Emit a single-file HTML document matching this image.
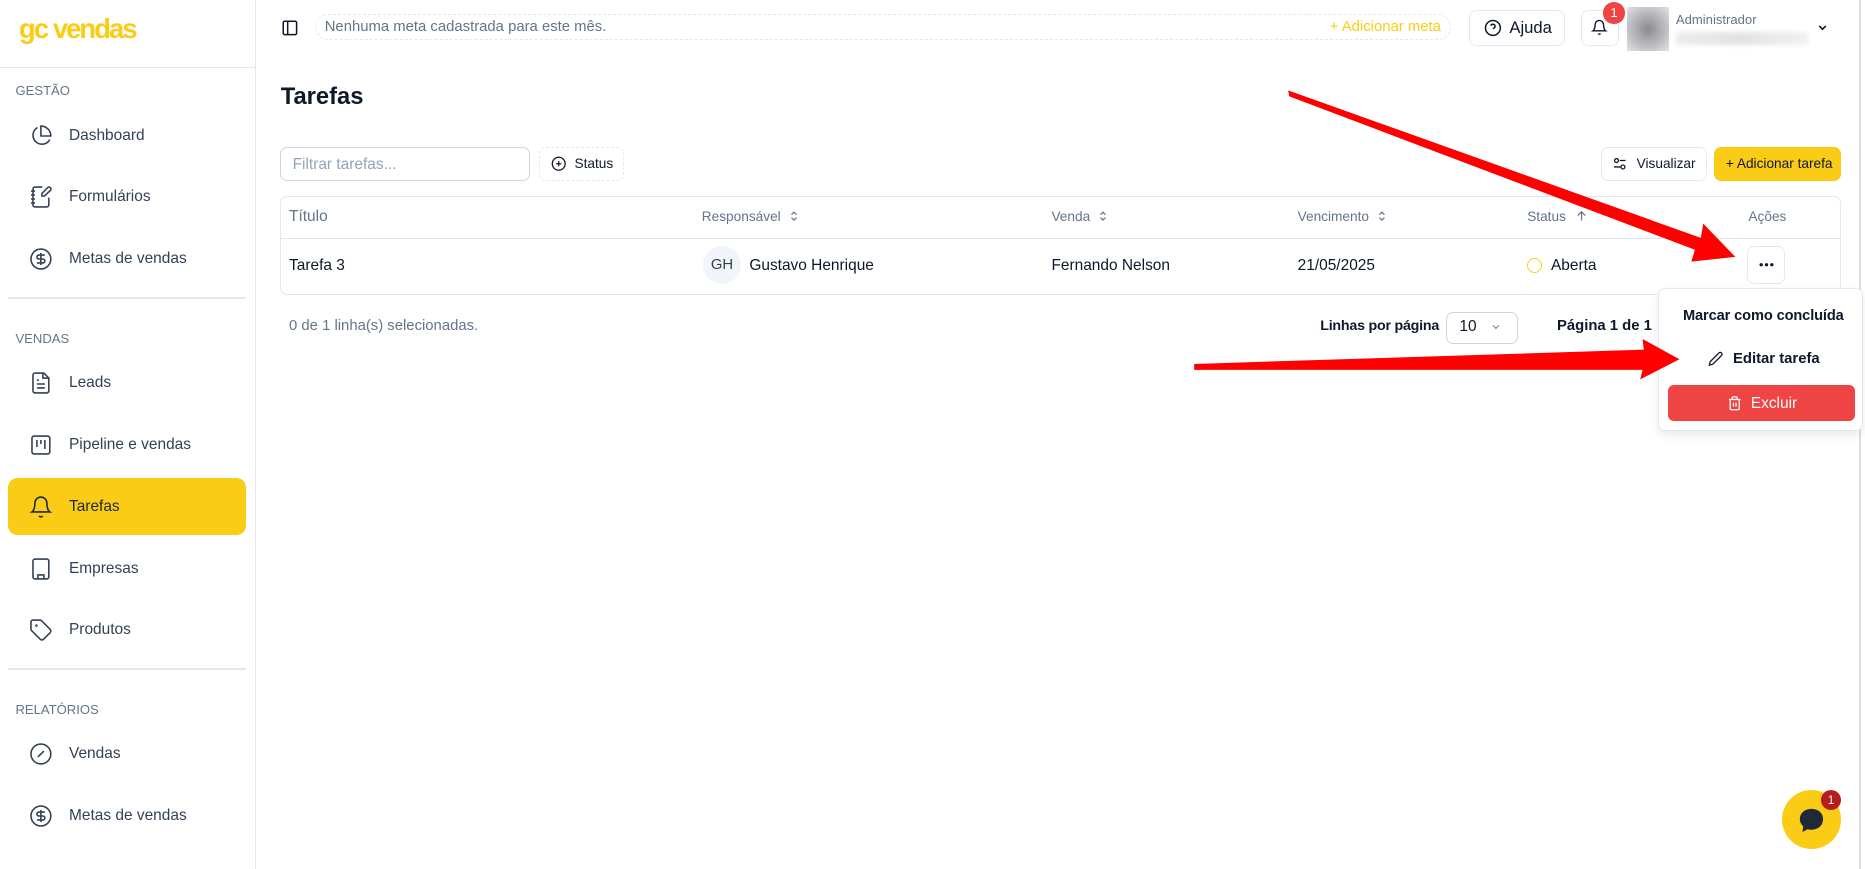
<!DOCTYPE html>
<html><head><meta charset="utf-8">
<style>
html,body{margin:0;padding:0;background:#fff;overflow:hidden}
body{width:1865px;height:869px}
#w{zoom:1.18941;width:1568px;height:731px;position:relative;font-family:"Liberation Sans",sans-serif;color:#0f172a}
.a{position:absolute}
.sb{left:0;top:0;width:214px;height:731px;border-right:1px solid #e5e7eb}
.lbl{font-size:11px;color:#64748b;left:13px}
.it{left:58px;font-size:13px;color:#334155;transform:translateY(-50%)}
.ic{left:24px;width:20px;height:20px;transform:translateY(-50%)}
.hr{height:1px;background:#e5e7eb}
.btn{border:1px solid #e2e8f0;border-radius:6px;background:#fff;box-sizing:border-box}
.th{font-size:11.5px;color:#64748b;top:176px}
.td{font-size:13px;color:#0f172a;top:216px}
.ud{display:inline-block;vertical-align:-2px;margin-left:6px}
</style></head><body><div id="w">
<div class="a sb"></div>
<div class="a" style="left:16px;top:11px;font-size:23px;font-weight:bold;color:#facc15;letter-spacing:-1.6px">gc vendas</div>
<div class="a hr" style="left:0;top:56px;width:214px"></div>
<div class="a lbl" style="top:70px">GESTÃO</div>
<svg class="a ic" style="top:114px" viewBox="0 0 24 24" fill="none" stroke="#334155" stroke-width="1.6"><path d="M21 15.5A9 9 0 1 1 8.5 3.5"/><path d="M22 12A10 10 0 0 0 12 2v10z"/></svg>
<div class="a it" style="top:114px">Dashboard</div>
<svg class="a ic" style="top:166px" viewBox="0 0 24 24" fill="none" stroke="#334155" stroke-width="1.6"><path d="M13.4 2H6a2 2 0 0 0-2 2v16a2 2 0 0 0 2 2h12a2 2 0 0 0 2-2v-7.4M2 6h4M2 10h4M2 14h4M2 18h4"/><path d="M21.4 5.6a2 2 0 1 0-2.8-2.8L13 8.4V11h2.6z"/></svg>
<div class="a it" style="top:166px">Formulários</div>
<svg class="a ic" style="top:218px" viewBox="0 0 24 24" fill="none" stroke="#334155" stroke-width="1.6"><circle cx="12" cy="12" r="10"/><path d="M16 8h-6a2 2 0 1 0 0 4h4a2 2 0 1 1 0 4H8M12 18V6"/></svg>
<div class="a it" style="top:218px">Metas de vendas</div>
<div class="a hr" style="left:7px;top:250px;width:200px"></div>
<div class="a lbl" style="top:278px">VENDAS</div>
<svg class="a ic" style="top:322px" viewBox="0 0 24 24" fill="none" stroke="#334155" stroke-width="1.6"><path d="M15 2H6a2 2 0 0 0-2 2v16a2 2 0 0 0 2 2h12a2 2 0 0 0 2-2V7z"/><path d="M14 2v5h6M16 13H8M16 17H8M10 9H8"/></svg>
<div class="a it" style="top:322px">Leads</div>
<svg class="a ic" style="top:374px" viewBox="0 0 24 24" fill="none" stroke="#334155" stroke-width="1.6"><rect x="3" y="3" width="18" height="18" rx="2"/><path d="M8 7v7M12 7v4M16 7v9"/></svg>
<div class="a it" style="top:374px">Pipeline e vendas</div>
<div class="a" style="left:7px;top:402px;width:200px;height:48px;background:#facc15;border-radius:8px"></div>
<svg class="a ic" style="top:426px" viewBox="0 0 24 24" fill="none" stroke="#1e293b" stroke-width="1.6"><path d="M6 8a6 6 0 0 1 12 0c0 7 3 9 3 9H3s3-2 3-9M10.3 21a1.94 1.94 0 0 0 3.4 0"/></svg>
<div class="a it" style="top:426px;color:#1e293b">Tarefas</div>
<svg class="a ic" style="top:478px" viewBox="0 0 24 24" fill="none" stroke="#334155" stroke-width="1.6"><rect x="4" y="2" width="16" height="20" rx="2"/><path d="M9 22v-4h6v4M8 6h.01M16 6h.01M12 6h.01M12 10h.01M12 14h.01M16 10h.01M16 14h.01M8 10h.01M8 14h.01"/></svg>
<div class="a it" style="top:478px">Empresas</div>
<svg class="a ic" style="top:530px" viewBox="0 0 24 24" fill="none" stroke="#334155" stroke-width="1.6"><path d="M12.6 2.6A2 2 0 0 0 11.2 2H4a2 2 0 0 0-2 2v7.2a2 2 0 0 0 .6 1.4l8.7 8.7a2.4 2.4 0 0 0 3.4 0l6.6-6.6a2.4 2.4 0 0 0 0-3.4z"/><circle cx="7.5" cy="7.5" r=".5"/></svg>
<div class="a it" style="top:530px">Produtos</div>
<div class="a hr" style="left:7px;top:562px;width:200px"></div>
<div class="a lbl" style="top:590px">RELATÓRIOS</div>
<svg class="a ic" style="top:634px" viewBox="0 0 24 24" fill="none" stroke="#334155" stroke-width="1.6"><circle cx="12" cy="12" r="10"/><path d="M15 9l-6 6"/></svg>
<div class="a it" style="top:634px">Vendas</div>
<svg class="a ic" style="top:686px" viewBox="0 0 24 24" fill="none" stroke="#334155" stroke-width="1.6"><circle cx="12" cy="12" r="10"/><path d="M16 8h-6a2 2 0 1 0 0 4h4a2 2 0 1 1 0 4H8M12 18V6"/></svg>
<div class="a it" style="top:686px">Metas de vendas</div>

<!-- header -->
<svg class="a" style="left:236px;top:16px" width="15" height="15" viewBox="0 0 24 24" fill="none" stroke="#0f172a" stroke-width="2"><rect x="3" y="3" width="18" height="18" rx="2"/><path d="M9 3v18"/></svg>
<div class="a" style="left:265px;top:12px;width:955px;height:22px;border:1px dashed #e2e8f0;border-radius:11px;box-sizing:border-box"></div>
<div class="a" style="left:273px;top:16px;font-size:12.5px;color:#64748b">Nenhuma meta cadastrada para este mês.</div>
<div class="a" style="left:1118px;top:16px;font-size:12.5px;color:#facc15">+ Adicionar meta</div>
<div class="a btn" style="left:1235px;top:8px;width:81px;height:31px"></div>
<svg class="a" style="left:1248px;top:16px" width="15" height="15" viewBox="0 0 24 24" fill="none" stroke="#0f172a" stroke-width="2"><circle cx="12" cy="12" r="10"/><path d="M9.1 9a3 3 0 0 1 5.8 1c0 2-3 3-3 3M12 17h.01"/></svg>
<div class="a" style="left:1269px;top:15px;font-size:14px">Ajuda</div>
<div class="a btn" style="left:1329px;top:8px;width:32px;height:31px"></div>
<svg class="a" style="left:1338px;top:16px" width="14" height="14" viewBox="0 0 24 24" fill="none" stroke="#0f172a" stroke-width="2"><path d="M6 8a6 6 0 0 1 12 0c0 7 3 9 3 9H3s3-2 3-9M10.3 21a1.94 1.94 0 0 0 3.4 0"/></svg>
<div class="a" style="left:1348px;top:2px;width:18px;height:18px;border-radius:9px;background:#ef4444;color:#fff;font-size:11px;text-align:center;line-height:18px">1</div>
<div class="a" style="left:1368px;top:6px;width:35px;height:37px;background:radial-gradient(circle,#8a8a90 0%,#c8c8cc 70%,#e4e4e6 100%)"></div>
<div class="a" style="left:1409px;top:10px;font-size:11px;color:#64748b">Administrador</div>
<div class="a" style="left:1409px;top:27px;width:112px;height:11px;background:linear-gradient(90deg,#ececee,#e2e2e4,#f2f2f3);filter:blur(2px)"></div>
<svg class="a" style="left:1527px;top:18px" width="11" height="11" viewBox="0 0 24 24" fill="none" stroke="#0f172a" stroke-width="3"><path d="M6 9l6 6 6-6"/></svg>
<div class="a" style="left:1563px;top:0;width:2px;height:731px;background:#ddd"></div>

<div class="a" style="left:236px;top:70px;font-size:20px;font-weight:bold">Tarefas</div>
<div class="a btn" style="left:235px;top:124px;width:211px;height:28px;border-color:#cbd5e1"></div>
<div class="a" style="left:246px;top:131px;font-size:13px;color:#94a3b8">Filtrar tarefas...</div>
<div class="a" style="left:453px;top:124px;width:72px;height:28px;border:1px dashed #e2e8f0;border-radius:6px;box-sizing:border-box"></div>
<svg class="a" style="left:463px;top:131px" width="13" height="13" viewBox="0 0 24 24" fill="none" stroke="#0f172a" stroke-width="2"><circle cx="12" cy="12" r="10"/><path d="M8 12h8M12 8v8"/></svg>
<div class="a" style="left:483px;top:131px;font-size:11.5px">Status</div>
<div class="a btn" style="left:1346px;top:124px;width:89px;height:28px"></div>
<svg class="a" style="left:1355px;top:131px" width="13" height="13" viewBox="0 0 24 24" fill="none" stroke="#0f172a" stroke-width="2"><path d="M21 7h-9M14 17H3"/><circle cx="7" cy="7" r="3"/><circle cx="17" cy="17" r="3"/></svg>
<div class="a" style="left:1376px;top:131px;font-size:11.5px">Visualizar</div>
<div class="a" style="left:1441px;top:124px;width:107px;height:28px;background:#facc15;border-radius:6px"></div>
<div class="a" style="left:1451px;top:131px;font-size:11.5px">+ Adicionar tarefa</div>

<div class="a" style="left:235px;top:165px;width:1313px;height:83px;border:1px solid #e2e8f0;border-radius:6px;box-sizing:border-box"></div>
<div class="a hr" style="left:236px;top:200px;width:1311px"></div>
<div class="a th" style="left:243px;font-size:13px;top:175px">Título</div>
<div class="a th" style="left:590px">Responsável<svg class="ud" width="10" height="12" viewBox="0 0 24 24" fill="none" stroke="#64748b" stroke-width="2.5"><path d="M7 9l5-5 5 5M7 15l5 5 5-5"/></svg></div>
<div class="a th" style="left:884px">Venda<svg class="ud" width="10" height="12" viewBox="0 0 24 24" fill="none" stroke="#64748b" stroke-width="2.5"><path d="M7 9l5-5 5 5M7 15l5 5 5-5"/></svg></div>
<div class="a th" style="left:1091px">Vencimento<svg class="ud" width="10" height="12" viewBox="0 0 24 24" fill="none" stroke="#64748b" stroke-width="2.5"><path d="M7 9l5-5 5 5M7 15l5 5 5-5"/></svg></div>
<div class="a th" style="left:1284px">Status<svg class="ud" style="margin-left:8px" width="11" height="12" viewBox="0 0 24 24" fill="none" stroke="#64748b" stroke-width="2.2"><path d="M12 20V4M5 11l7-7 7 7"/></svg></div>
<div class="a th" style="left:1470px">Ações</div>
<div class="a td" style="left:243px">Tarefa 3</div>
<div class="a" style="left:591px;top:207px;width:32px;height:32px;border-radius:16px;background:#f1f5f9;font-size:12.5px;text-align:center;line-height:32px;color:#334155">GH</div>
<div class="a td" style="left:630px">Gustavo Henrique</div>
<div class="a td" style="left:884px">Fernando Nelson</div>
<div class="a td" style="left:1091px">21/05/2025</div>
<div class="a" style="left:1284px;top:217px;width:11px;height:11px;border:1.5px solid #facc15;border-radius:50%"></div>
<div class="a td" style="left:1304px">Aberta</div>
<div class="a btn" style="left:1469px;top:207px;width:32px;height:32px"></div>
<svg class="a" style="left:1477px;top:219px" width="16" height="8" viewBox="0 0 16 8"><circle cx="3.5" cy="4" r="1.4" fill="#0f172a"/><circle cx="8" cy="4" r="1.4" fill="#0f172a"/><circle cx="12.5" cy="4" r="1.4" fill="#0f172a"/></svg>

<div class="a" style="left:243px;top:267px;font-size:12.5px;color:#64748b">0 de 1 linha(s) selecionadas.</div>
<div class="a" style="left:1110px;top:267px;font-size:12px;font-weight:bold;color:#0f172a;letter-spacing:-0.2px">Linhas por página</div>
<div class="a btn" style="left:1216px;top:262px;width:60px;height:27px;border-color:#cbd5e1"></div>
<div class="a" style="left:1227px;top:267px;font-size:13px">10</div>
<svg class="a" style="left:1253px;top:270px" width="10" height="10" viewBox="0 0 24 24" fill="none" stroke="#64748b" stroke-width="2"><path d="M6 9l6 6 6-6"/></svg>
<div class="a" style="left:1309px;top:267px;font-size:12.5px;font-weight:bold">Página 1 de 1</div>

<div class="a" style="left:1394px;top:242px;width:172px;height:120px;background:#fff;border:1px solid #e2e8f0;border-radius:6px;box-shadow:0 4px 8px rgba(0,0,0,.08);box-sizing:border-box"></div>
<div class="a" style="left:1415px;top:259px;font-size:12.3px;font-weight:bold;letter-spacing:-0.1px">Marcar como concluída</div>
<svg class="a" style="left:1436px;top:295px" width="13" height="13" viewBox="0 0 24 24" fill="none" stroke="#0f172a" stroke-width="2"><path d="M17 3a2.8 2.8 0 1 1 4 4L7.5 20.5 2 22l1.5-5.5z"/></svg>
<div class="a" style="left:1457px;top:295px;font-size:12.5px;font-weight:bold">Editar tarefa</div>
<div class="a" style="left:1402px;top:324px;width:158px;height:30px;background:#ef4444;border-radius:5px"></div>
<svg class="a" style="left:1452px;top:332px" width="13" height="14" viewBox="0 0 24 24" fill="none" stroke="#fff" stroke-width="2"><path d="M3 6h18M19 6v14a2 2 0 0 1-2 2H7a2 2 0 0 1-2-2V6M8 6V4a2 2 0 0 1 2-2h4a2 2 0 0 1 2 2v2M10 11v6M14 11v6"/></svg>
<div class="a" style="left:1472px;top:332px;font-size:13px;color:#fff">Excluir</div>

<svg class="a" style="left:0;top:0" width="1568" height="731">
<polygon fill="#ff0000" points="1083,76 1084,81 1425,210 1422,220 1459,216 1432,188 1430,200" />
<polygon fill="#ff0000" points="1004,306 1004,311 1381,311 1379,319 1412,302 1381,285 1382,294" />
</svg>

<div class="a" style="left:1498px;top:664px;width:50px;height:50px;border-radius:25px;background:#facc15"></div>
<svg class="a" style="left:1510px;top:677px" width="26" height="26" viewBox="0 0 24 24"><path fill="#1f2937" d="M12 3C6.5 3 3 6.6 3 11c0 2.2 1 4.1 2.6 5.5L5 21l4-2.2c1 .3 2 .4 3 .4 5.5 0 9-3.6 9-8.2S17.5 3 12 3z"/></svg>
<div class="a" style="left:1531px;top:664px;width:17px;height:17px;border-radius:9px;background:#b91c1c;color:#fff;font-size:10px;text-align:center;line-height:17px">1</div>
</div></body></html>
